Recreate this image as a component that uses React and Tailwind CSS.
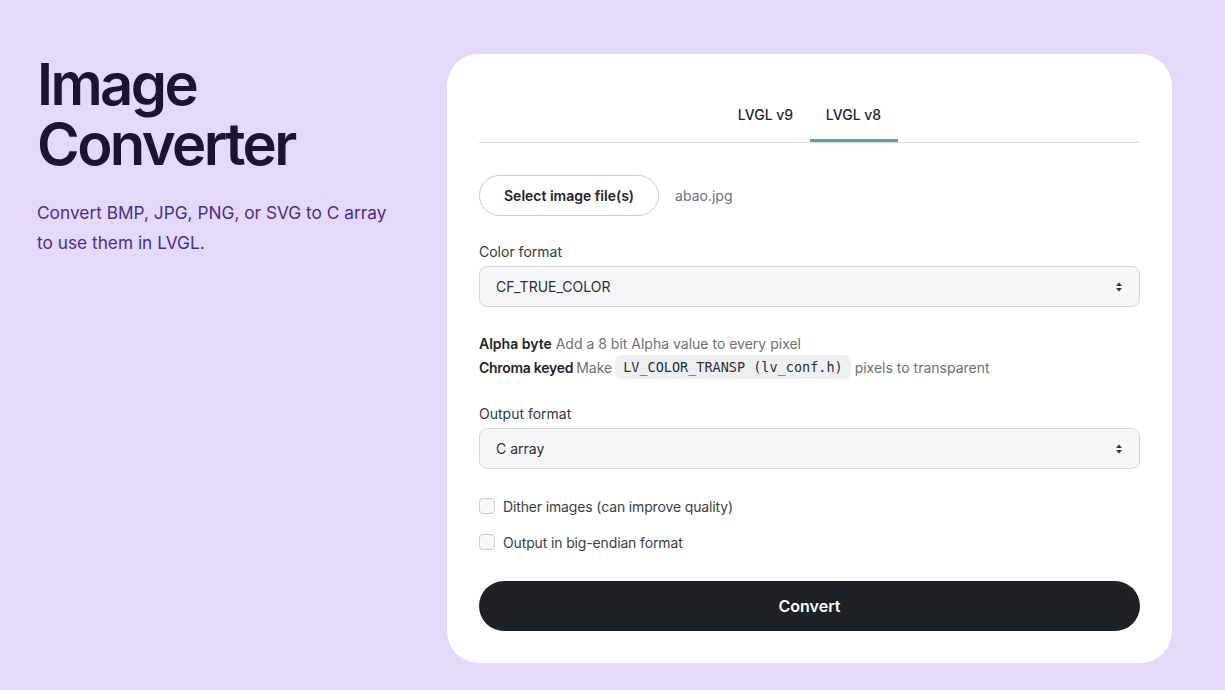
import { useState } from "react";

const Chevrons = () => (
  <svg width="8" height="12" viewBox="0 0 8 12" className="text-[#333]">
    <path d="M4 1.5L7 5H1z" fill="currentColor" />
    <path d="M4 10.5L1 7h6z" fill="currentColor" />
  </svg>
);

const SelectBox = ({ value }) => (
  <div className="h-[41px] w-full rounded-lg border border-[#d4d6d9] bg-[#f5f6f7] px-4 flex items-center justify-between text-[14px] text-[#2b2f33]">
    <span>{value}</span>
    <Chevrons />
  </div>
);

const Check = ({ label }) => (
  <label className="flex items-center gap-2 text-[14px] tracking-[-0.01em] text-[#3a3f44] h-6">
    <span className="w-4 h-4 rounded-[4px] border border-[#c9ccd0] bg-[#f7f8f9]" />
    {label}
  </label>
);

export default function App() {
  const [tab, setTab] = useState("v8");

  return (
    <div
      className="min-h-[690px] w-full bg-[#e4d9f9] flex px-[37px] pt-[54px]"
      style={{ fontFamily: "Inter, 'Noto Sans', sans-serif" }}
    >
      <div className="w-[410px] shrink-0">
        <h1 className="text-[58px] leading-[60px] font-semibold tracking-[-0.045em] text-[#1b1236]">
          Image
          <br />
          Converter
        </h1>
        <p className="mt-6 text-[17.3px] leading-[30px] text-[#4a2d8b]">
          Convert BMP, JPG, PNG, or SVG to C array
          <br />
          to use them in LVGL.
        </p>
      </div>

      <div className="w-[725px] h-[609px] shrink-0 bg-white rounded-[32px] p-8">
        <div className="flex justify-center border-b border-[#dcdde0]">
          {["v9", "v8"].map((v) => (
            <button
              key={v}
              onClick={() => setTab(v)}
              className={
                "w-[88px] h-[56px] pt-[3px] text-[14px] text-[#1f2428] font-medium border-b-[3px] " +
                (tab === v ? "border-[#5b9fa6]" : "border-transparent")
              }
            >
              LVGL {v}
            </button>
          ))}
        </div>

        <div className="mt-8 flex items-center gap-4">
          <button className="h-[41px] px-6 rounded-full border border-[#c8cacd] text-[14px] font-semibold text-[#1f2428]">
            Select image file(s)
          </button>
          <span className="text-[14px] text-[#6b7278]">abao.jpg</span>
        </div>

        <div className="mt-6 text-[14px] leading-6 text-[#33383d] mb-[2px]">Color format</div>
        <SelectBox value="CF_TRUE_COLOR" />

        <div className="mt-[25px] text-[14px] leading-[23px] text-[#6b7075]">
          <div>
            <span className="font-semibold text-[#1f2428]">Alpha byte</span> Add a 8 bit Alpha value to every pixel
          </div>
          <div className="flex items-center">
            <span className="font-semibold tracking-[-0.02em] text-[#1f2428]">Chroma keyed</span>
            <span className="ml-[3px]">Make</span>
            <code
              className="ml-[3px] mr-1 px-2 h-6 flex items-center rounded-md bg-[#eeeff0] text-[13.5px] text-[#2b2f33]"
              style={{ fontFamily: "'DejaVu Sans Mono', 'Liberation Mono', monospace" }}
            >
              LV_COLOR_TRANSP (lv_conf.h)
            </code>
            <span>pixels to transparent</span>
          </div>
        </div>

        <div className="mt-[23px] text-[14px] leading-6 text-[#33383d] mb-[2px]">Output format</div>
        <SelectBox value="C array" />

        <div className="mt-[25px] flex flex-col gap-3">
          <Check label="Dither images (can improve quality)" />
          <Check label="Output in big-endian format" />
        </div>

        <button className="mt-[27px] w-full h-[50px] rounded-full bg-[#1b2124] text-white text-[16px] font-semibold">
          Convert
        </button>
      </div>
    </div>
  );
}
